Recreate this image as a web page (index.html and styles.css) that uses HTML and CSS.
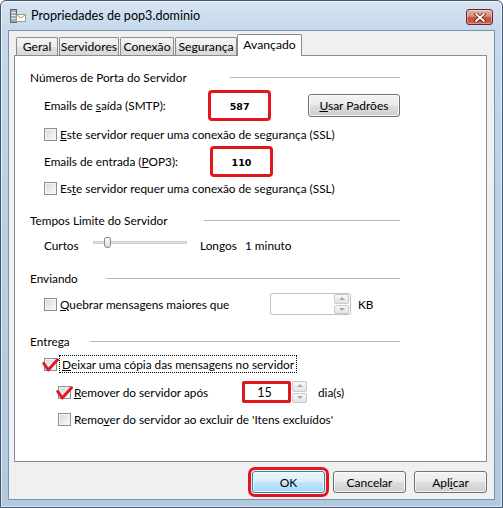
FILE: index.html
```html
<!DOCTYPE html>
<html lang="pt">
<head>
<meta charset="utf-8">
<title>Propriedades de pop3.dominio</title>
<link rel="stylesheet" href="styles.css">
</head>
<body>
<div class="window">
  <div class="titlebar">
    <svg class="app-icon" width="16" height="16" viewBox="0 0 16 16">
      <rect x="0.5" y="1.5" width="6" height="13" fill="#a4aab0" stroke="#5f656b"/>
      <line x1="1.5" y1="4.5" x2="5.5" y2="4.5" stroke="#eef0f2"/>
      <line x1="1.5" y1="7.5" x2="5.5" y2="7.5" stroke="#eef0f2"/>
      <line x1="1.5" y1="10.5" x2="5.5" y2="10.5" stroke="#eef0f2"/>
      <rect x="6.5" y="6.5" width="9" height="7" fill="#fbfbf4" stroke="#9d9d8a"/>
      <path d="M6.5 6.5 L11 10 L15.5 6.5" fill="none" stroke="#9d9d8a"/>
    </svg>
    <span class="title">Propriedades de pop3.dominio</span>
    <button class="close-btn" aria-label="Fechar">
      <svg width="12" height="9" viewBox="0 0 12 9">
        <path d="M2 1 L10 8 M10 1 L2 8" stroke="#5a1c15" stroke-width="3.4" stroke-linecap="round"/>
        <path d="M2 1 L10 8 M10 1 L2 8" stroke="#ffffff" stroke-width="1.8" stroke-linecap="round"/>
      </svg>
    </button>
  </div>

  <div class="client">
    <div class="tabs">
      <div class="tab tab-geral">Geral</div>
      <div class="tab tab-serv">Servidores</div>
      <div class="tab tab-con">Conexão</div>
      <div class="tab tab-seg">Segurança</div>
      <div class="tab tab-av active">Avançado</div>
    </div>

    <div class="panel">
      <div class="group-head gh-ports"><span class="gh-label">Números de Porta do Servidor</span><span class="rule"></span></div>

      <div class="row port-row row-smtp">
        <span class="field-label">Emails de <u>s</u>aída (SMTP):</span>
        <span class="port-box">587</span>
        <button class="btn btn-defaults"><u>U</u>sar Padrões</button>
      </div>

      <div class="row check-row row-ssl1">
        <span class="checkbox"></span>
        <span class="check-label"><u>E</u>ste servidor requer uma conexão de segurança (SSL)</span>
      </div>

      <div class="row port-row row-pop">
        <span class="field-label">Emails de entrada (<u>P</u>OP3):</span>
        <span class="port-box">110</span>
      </div>

      <div class="row check-row row-ssl2">
        <span class="checkbox"></span>
        <span class="check-label">Es<u>t</u>e servidor requer uma conexão de segurança (SSL)</span>
      </div>

      <div class="group-head gh-time"><span class="gh-label">Tempos Limite do Servidor</span><span class="rule"></span></div>

      <div class="row slider-row">
        <span class="short-label">Curtos</span>
        <span class="slider"><span class="track"></span><span class="thumb"></span></span>
        <span class="long-label">Longos</span>
        <span>1 minuto</span>
      </div>

      <div class="group-head gh-send"><span class="gh-label">Enviando</span><span class="rule"></span></div>

      <div class="row check-row row-split">
        <span class="checkbox"></span>
        <span class="check-label split-label"><u>Q</u>uebrar mensagens maiores que</span>
        <span class="spinbox">
          <span class="spin"><span class="spin-btn up"></span><span class="spin-btn down"></span></span>
        </span>
        <span class="unit">KB</span>
      </div>

      <div class="group-head gh-deliver"><span class="gh-label">Entrega</span><span class="rule"></span></div>

      <div class="row check-row row-leave">
        <span class="checkbox checked">
          <svg class="red-check" width="17" height="14" viewBox="0 0 17 14"><path d="M1.8 5.5 L6.2 12 L15.5 1.8" fill="none" stroke="#e01a22" stroke-width="3" stroke-linecap="round" stroke-linejoin="round"/></svg>
        </span>
        <span class="focus-label"><u>D</u>eixar uma cópia das mensagens no servidor</span>
      </div>

      <div class="row check-row row-remove">
        <span class="checkbox checked">
          <svg class="red-check" width="17" height="14" viewBox="0 0 17 14"><path d="M1.8 5.5 L6.2 12 L15.5 1.8" fill="none" stroke="#e01a22" stroke-width="3" stroke-linecap="round" stroke-linejoin="round"/></svg>
        </span>
        <span class="check-label remove-label"><u>R</u>emover do servidor após</span>
        <span class="days-box">15</span>
        <span class="spin small-spin"><span class="spin-btn up"></span><span class="spin-btn down"></span></span>
        <span class="unit days-unit">dia(s)</span>
      </div>

      <div class="row check-row row-remove-del">
        <span class="checkbox"></span>
        <span class="check-label">Remo<u>v</u>er do servidor ao excluir de 'Itens excluídos'</span>
      </div>
    </div>

    <div class="footer">
      <button class="btn btn-default">OK</button>
      <button class="btn">Cancelar</button>
      <button class="btn">Apl<u>i</u>car</button>
    </div>
  </div>
</div>
</body>
</html>
```

FILE: styles.css
```css
* { box-sizing: border-box; }
html, body { margin: 0; padding: 0; }
body {
  width: 503px;
  height: 508px;
  overflow: hidden;
  background: #ffffff;
  font-family: "Lato", "Noto Sans", sans-serif;
  font-size: 11.8px;
  color: #000;
}
u { text-decoration: underline; text-underline-offset: 1px; }

.window {
  width: 503px;
  height: 508px;
  display: flex;
  flex-direction: column;
  padding: 0 7px 7px 7px;
  border: 1px solid #43566b;
  border-radius: 6px 6px 0 0;
  background: linear-gradient(180deg, #d6e4f2 0px, #c6d9ec 28px, #b9cfe5 45%, #b1c9e1 100%);
  box-shadow: inset 0 0 0 1px rgba(255,255,255,0.6);
}

.titlebar {
  height: 29px;
  flex-shrink: 0;
  display: flex;
  align-items: center;
}
.app-icon { margin-left: 2px; flex-shrink: 0; }
.title {
  margin-left: 5px;
  flex: 1;
  font-size: 12.6px;
  color: #000;
}
.close-btn {
  width: 27px;
  height: 16px;
  margin-right: 2px;
  margin-top: 3px;
  padding: 0;
  display: flex;
  align-items: center;
  justify-content: center;
  border: 1px solid #6a2b26;
  border-radius: 3px;
  background: linear-gradient(180deg, #e8b3a8 0%, #d98b7e 45%, #c4513f 55%, #c9624e 100%);
  box-shadow: inset 0 0 0 1px rgba(255,255,255,0.35);
}

.client {
  flex: 1;
  display: flex;
  flex-direction: column;
  background: #f0f0f0;
  border: 1px solid #7d91a8;
  padding: 3px 7px 0 5px;
}

/* Tabs */
.tabs {
  display: flex;
  align-items: flex-end;
  padding-left: 2px;
  flex-shrink: 0;
}
.tab {
  height: 18px;
  margin-right: 1px;
  border: 1px solid #898c95;
  border-bottom: 0;
  border-radius: 2px 2px 0 0;
  background: linear-gradient(180deg, #f4f4f4 0%, #ececec 50%, #dfdfdf 51%, #d9d9d9 100%);
  display: flex;
  align-items: center;
  justify-content: center;
  white-space: nowrap;
  font-size: 12.2px;
}
.tab-geral { width: 42px; }
.tab-serv { width: 60px; }
.tab-con { width: 54px; }
.tab-seg { width: 62px; }
.tab-av { width: 65px; }
.tab.active {
  height: 22px;
  padding-bottom: 2px;
  margin-left: -1px;
  margin-bottom: -1px;
  background: #ffffff;
  position: relative;
  z-index: 1;
}

/* Panel */
.panel {
  height: 407px;
  flex-shrink: 0;
  border: 1px solid #898c95;
  background: #ffffff;
  padding: 0 86px 0 15px;
  display: flex;
  flex-direction: column;
}

.group-head {
  display: flex;
  align-items: center;
  height: 16px;
  white-space: nowrap;
}
.rule { flex: 1; height: 1px; background: #b9b9b9; }
.gh-ports { margin-top: 13px; }
.gh-ports .gh-label { width: 200px; }
.gh-time { margin-top: 16px; }
.gh-time .gh-label { width: 174px; }
.gh-send { margin-top: 17px; }
.gh-send .gh-label { width: 76px; }
.gh-deliver { margin-top: 18px; }
.gh-deliver .gh-label { width: 60px; }

.row {
  display: flex;
  align-items: center;
  margin-left: 14px;
  white-space: nowrap;
}
.port-row { height: 31px; }
.row-smtp { margin-top: 5px; }
.row-pop { margin-top: 4px; }
.check-row { height: 16px; }
.row-ssl1 { margin-top: 5px; }
.row-ssl2 { margin-top: 3px; }
.slider-row { height: 16px; margin-top: 9px; }
.row-split { height: 22px; margin-top: 7px; }
.row-leave { height: 18px; margin-top: 6px; }
.row-remove { height: 22px; margin-top: 8px; margin-left: 28px; }
.row-remove-del { margin-top: 8px; margin-left: 28px; }

.field-label { width: 166px; }
.port-box {
  width: 63px;
  height: 31px;
  border: 3px solid #e3151d;
  border-radius: 4px;
  background: #fff;
  display: flex;
  align-items: center;
  justify-content: center;
  font-family: "DejaVu Sans", sans-serif;
  font-weight: bold;
  font-size: 9.5px;
  padding-top: 1px;
}

.btn {
  width: 73px;
  height: 22px;
  padding: 0;
  border: 1px solid #707070;
  border-radius: 3px;
  background: linear-gradient(180deg, #f3f3f3 0%, #ebebeb 48%, #dddddd 52%, #cfcfcf 100%);
  box-shadow: inset 0 0 0 1px rgba(255,255,255,0.75);
  font-family: inherit;
  font-size: 12px;
  color: #000;
}
.btn-defaults {
  width: 93px;
  height: 23px;
  margin-left: 37px;
}

.checkbox {
  position: relative;
  width: 13px;
  height: 13px;
  flex-shrink: 0;
  border: 1px solid #8e8f8f;
  background: linear-gradient(135deg, #d3d6da 0%, #f1f1f1 70%, #fbfbfb 100%);
  box-shadow: inset 0 0 0 1px #f4f4f4;
}
.check-label { margin-left: 3px; }
.red-check {
  position: absolute;
  left: -3px;
  top: -1px;
}

/* Slider */
.short-label { width: 49px; }
.slider {
  position: relative;
  width: 94px;
  height: 16px;
  align-self: flex-start;
}
.track {
  position: absolute;
  left: 0;
  right: 0;
  top: 4px;
  height: 3px;
  border: 1px solid #c8c8c8;
  background: #e9e9e9;
}
.thumb {
  position: absolute;
  left: 11px;
  top: 0px;
  width: 7px;
  height: 11px;
  border: 1px solid #8b8b8b;
  border-radius: 2px 2px 3px 3px;
  background: linear-gradient(180deg, #fafafa, #dcdcdc);
}
.long-label { margin-left: 13px; width: 45px; }

/* Spin boxes */
.split-label { width: 210px; }
.spinbox {
  width: 81px;
  height: 22px;
  border: 1px solid #c2c2c2;
  border-radius: 2px;
  background: #fff;
  display: flex;
  justify-content: flex-end;
  align-items: center;
  padding-right: 1px;
}
.spin {
  width: 15px;
  height: 20px;
  display: flex;
  flex-direction: column;
  gap: 1px;
}
.spin-btn {
  flex: 1;
  position: relative;
  border: 1px solid #c9c9c9;
  border-radius: 2px;
  background: linear-gradient(180deg, #f7f7f7, #e4e4e4);
}
.spin-btn::after {
  content: "";
  position: absolute;
  left: 4px;
  top: 2px;
  border-left: 3px solid transparent;
  border-right: 3px solid transparent;
}
.spin-btn.up::after { border-bottom: 3px solid #a9a9a9; }
.spin-btn.down::after { border-top: 3px solid #a9a9a9; }
.unit { margin-left: 7px; }

.focus-label {
  margin-left: 2px;
  height: 18px;
  padding: 0 2px;
  border: 1px dotted #000;
  display: flex;
  align-items: center;
}

.remove-label { width: 168px; }
.days-box {
  width: 49px;
  height: 22px;
  border: 3px solid #e3151d;
  border-radius: 2px;
  background: #fff;
  display: flex;
  align-items: center;
  justify-content: center;
  padding-right: 4px;
  font-size: 12.5px;
}
.small-spin { height: 22px; width: 15px; margin-left: 1px; }
.days-unit { margin-left: 11px; }

/* Footer */
.footer {
  display: flex;
  justify-content: flex-end;
  gap: 8px;
  margin-top: 9px;
}
.btn-default {
  border-color: #3c7fb1;
  background: linear-gradient(180deg, #eaf6fd 0%, #d9f0fc 48%, #bee6fd 52%, #a7d9f5 100%);
  outline: 3px solid #e3151d;
  outline-offset: 1px;
}
```
